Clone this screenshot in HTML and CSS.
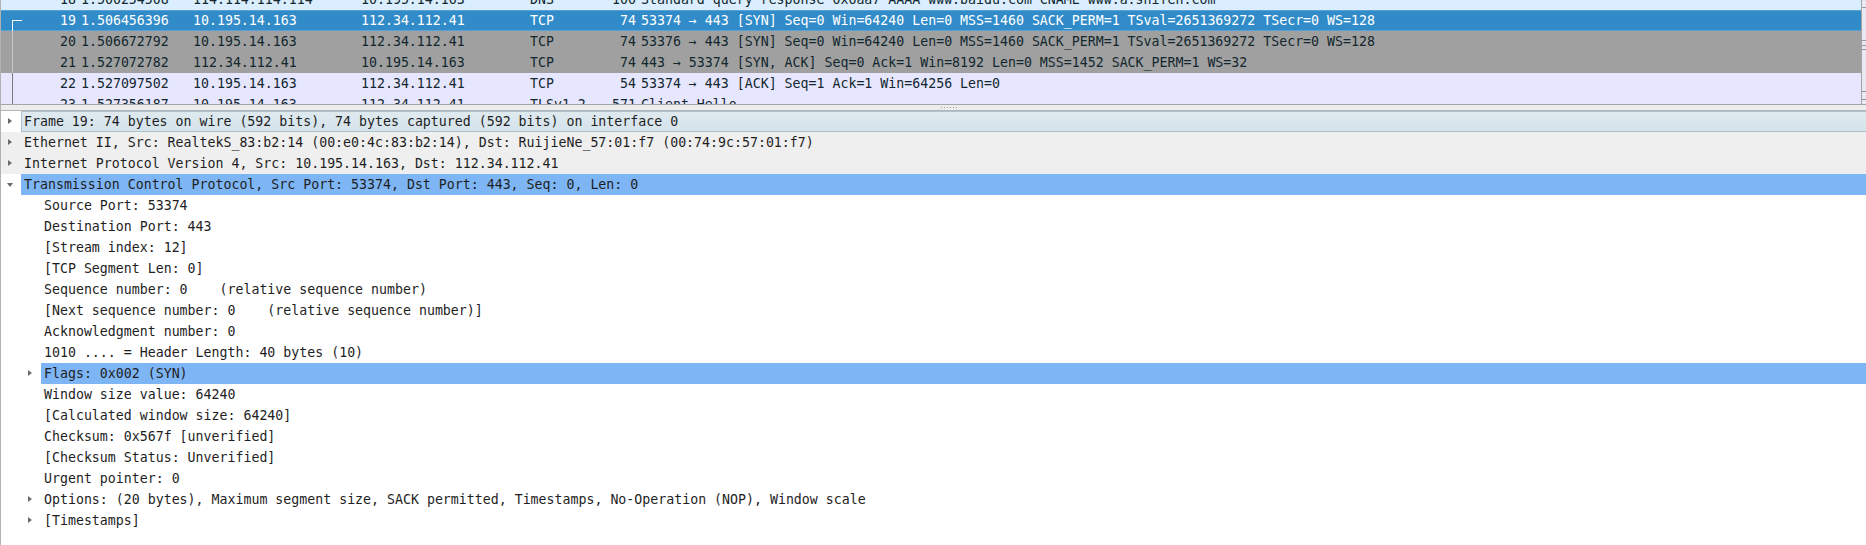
FILE: index.html
```html
<!DOCTYPE html>
<html>
<head>
<meta charset="utf-8">
<link rel="stylesheet" href="styles.css">
</head>
<body>
<div class="app">
  <div class="plist">
    <div class="plist-rows">
      <div class="plist-inner">
        <div class="prow dns"><span class="c no">18</span><span class="c tm">1.500254508</span><span class="c src">114.114.114.114</span><span class="c dst">10.195.14.163</span><span class="c pr">DNS</span><span class="c len">100</span><span class="c info">Standard query response 0x6aa7 AAAA www.baidu.com CNAME www.a.shifen.com</span></div>
        <div class="prow sel"><span class="c no"><i class="rel-start"></i>19</span><span class="c tm">1.506456396</span><span class="c src">10.195.14.163</span><span class="c dst">112.34.112.41</span><span class="c pr">TCP</span><span class="c len">74</span><span class="c info">53374 → 443 [SYN] Seq=0 Win=64240 Len=0 MSS=1460 SACK_PERM=1 TSval=2651369272 TSecr=0 WS=128</span></div>
        <div class="prow syn"><span class="c no"><i class="rel-line"></i>20</span><span class="c tm">1.506672792</span><span class="c src">10.195.14.163</span><span class="c dst">112.34.112.41</span><span class="c pr">TCP</span><span class="c len">74</span><span class="c info">53376 → 443 [SYN] Seq=0 Win=64240 Len=0 MSS=1460 SACK_PERM=1 TSval=2651369272 TSecr=0 WS=128</span></div>
        <div class="prow syn"><span class="c no"><i class="rel-line"></i>21</span><span class="c tm">1.527072782</span><span class="c src">112.34.112.41</span><span class="c dst">10.195.14.163</span><span class="c pr">TCP</span><span class="c len">74</span><span class="c info">443 → 53374 [SYN, ACK] Seq=0 Ack=1 Win=8192 Len=0 MSS=1452 SACK_PERM=1 WS=32</span></div>
        <div class="prow tcp"><span class="c no"><i class="rel-line"></i>22</span><span class="c tm">1.527097502</span><span class="c src">10.195.14.163</span><span class="c dst">112.34.112.41</span><span class="c pr">TCP</span><span class="c len">54</span><span class="c info">53374 → 443 [ACK] Seq=1 Ack=1 Win=64256 Len=0</span></div>
        <div class="prow tcp"><span class="c no"><i class="rel-line"></i>23</span><span class="c tm">1.527356187</span><span class="c src">10.195.14.163</span><span class="c dst">112.34.112.41</span><span class="c pr">TLSv1.2</span><span class="c len">571</span><span class="c info">Client Hello</span></div>
      </div>
    </div>
    <div class="minimap">
      <i class="mk m1"></i><i class="mk m2"></i><i class="mk m3"></i><i class="mk m4"></i><i class="mk m5"></i><i class="mk m6"></i>
    </div>
  </div>
  <div class="splitter"><span class="grip"><i></i><i></i><i></i><i></i><i></i><i></i></span></div>
  <div class="tree">
    <div class="node l0 hover"><span class="tw"><i class="ar-r"></i></span><span class="lbl">Frame 19: 74 bytes on wire (592 bits), 74 bytes captured (592 bits) on interface 0</span></div>
    <div class="node l0 grey"><span class="tw"><i class="ar-r"></i></span><span class="lbl">Ethernet II, Src: RealtekS_83:b2:14 (00:e0:4c:83:b2:14), Dst: RuijieNe_57:01:f7 (00:74:9c:57:01:f7)</span></div>
    <div class="node l0 grey"><span class="tw"><i class="ar-r"></i></span><span class="lbl">Internet Protocol Version 4, Src: 10.195.14.163, Dst: 112.34.112.41</span></div>
    <div class="node l0 hl"><span class="tw"><i class="ar-d"></i></span><span class="lbl">Transmission Control Protocol, Src Port: 53374, Dst Port: 443, Seq: 0, Len: 0</span></div>
    <div class="node l1"><span class="ind"></span><span class="tw"></span><span class="lbl">Source Port: 53374</span></div>
    <div class="node l1"><span class="ind"></span><span class="tw"></span><span class="lbl">Destination Port: 443</span></div>
    <div class="node l1"><span class="ind"></span><span class="tw"></span><span class="lbl">[Stream index: 12]</span></div>
    <div class="node l1"><span class="ind"></span><span class="tw"></span><span class="lbl">[TCP Segment Len: 0]</span></div>
    <div class="node l1"><span class="ind"></span><span class="tw"></span><span class="lbl">Sequence number: 0    (relative sequence number)</span></div>
    <div class="node l1"><span class="ind"></span><span class="tw"></span><span class="lbl">[Next sequence number: 0    (relative sequence number)]</span></div>
    <div class="node l1"><span class="ind"></span><span class="tw"></span><span class="lbl">Acknowledgment number: 0</span></div>
    <div class="node l1"><span class="ind"></span><span class="tw"></span><span class="lbl">1010 .... = Header Length: 40 bytes (10)</span></div>
    <div class="node l1 hl"><span class="ind"></span><span class="tw"><i class="ar-r"></i></span><span class="lbl">Flags: 0x002 (SYN)</span></div>
    <div class="node l1"><span class="ind"></span><span class="tw"></span><span class="lbl">Window size value: 64240</span></div>
    <div class="node l1"><span class="ind"></span><span class="tw"></span><span class="lbl">[Calculated window size: 64240]</span></div>
    <div class="node l1"><span class="ind"></span><span class="tw"></span><span class="lbl">Checksum: 0x567f [unverified]</span></div>
    <div class="node l1"><span class="ind"></span><span class="tw"></span><span class="lbl">[Checksum Status: Unverified]</span></div>
    <div class="node l1"><span class="ind"></span><span class="tw"></span><span class="lbl">Urgent pointer: 0</span></div>
    <div class="node l1"><span class="ind"></span><span class="tw"><i class="ar-r"></i></span><span class="lbl">Options: (20 bytes), Maximum segment size, SACK permitted, Timestamps, No-Operation (NOP), Window scale</span></div>
    <div class="node l1"><span class="ind"></span><span class="tw"><i class="ar-r"></i></span><span class="lbl">[Timestamps]</span></div>
  </div>
</div>
</body>
</html>
```

FILE: styles.css
```css
html, body {
  margin: 0;
  padding: 0;
  background: #ffffff;
}
body {
  font-family: "DejaVu Sans Mono", monospace;
  font-size: 13.25px;
  color: #1c1c1c;
}
.app {
  height: 545px;
  overflow: hidden;
  border-left: 1px solid #b2b2b2;
  display: flex;
  flex-direction: column;
}

/* packet list */
.plist {
  height: 104px;
  flex: none;
  display: flex;
  border-bottom: 1px solid #a6a6a6;
  overflow: hidden;
}
.plist-rows {
  flex: 1;
  overflow: hidden;
  border-right: 1px solid #a4a4a4;
}
.plist-inner {
  margin-top: -11px;
}
.prow {
  display: grid;
  grid-template-columns: 78px 111px 168px 169px 73px 39px 1fr;
  height: 21px;
  line-height: 21px;
  white-space: pre;
  color: #12272e;
}
.c { overflow: hidden; }
.no { text-align: right; padding-right: 3px; position: relative; }
.tm { padding-left: 2px; }
.src { padding-left: 3px; }
.dst { padding-left: 3px; }
.pr { padding-left: 3px; }
.len { text-align: right; padding-right: 3px; }
.info { padding-left: 2px; }

.dns { background: #daeeff; }
.sel {
  background: #308bc8;
  color: #ffffff;
  box-shadow: inset 0 1px 0 #56a2d6, inset 0 -1px 0 #56a2d6;
}
.syn { background: #a0a0a0; }
.tcp { background: #e7e6ff; }

.rel-start {
  position: absolute;
  left: 11px;
  top: 10px;
  width: 10px;
  height: 11px;
  border-left: 1px solid #ffffff;
  border-top: 1px solid #ffffff;
  box-sizing: border-box;
}
.rel-line {
  position: absolute;
  left: 11px;
  top: 0;
  width: 1px;
  height: 21px;
  background: #7c7c7c;
}
.syn .rel-line { background: #c4c4c4; }

.minimap {
  width: 4px;
  flex: none;
  background: #e8e8f4;
  position: relative;
}
.mk {
  position: absolute;
  left: 0;
  width: 4px;
  height: 1px;
  background: #9a9a9a;
}
.m1 { top: 7px; }
.m2 { top: 40px; }
.m3 { top: 45px; }
.m4 { top: 49px; }
.m5 { top: 91px; }
.m6 { top: 99px; }

/* splitter */
.splitter {
  height: 5px;
  flex: none;
  background: #ededed;
  border-bottom: 1px solid #b4b4b4;
  display: flex;
  justify-content: center;
  align-items: center;
}
.grip {
  display: flex;
  gap: 2px;
  margin-left: 30px;
}
.grip i {
  width: 1px;
  height: 1px;
  background: #9c9c9c;
}

/* details tree */
.tree {
  flex: 1;
}
.node {
  display: flex;
  height: 21px;
  line-height: 21px;
  white-space: pre;
  color: #1e1e1e;
}
.ind { width: 20px; flex: none; }
.tw {
  width: 20px;
  flex: none;
  position: relative;
}
.lbl {
  flex: 1;
  padding-left: 3px;
  overflow: hidden;
}
.grey { background: #efefef; }
.hover .lbl {
  background: linear-gradient(#dfeaf0, #d5e2ea);
  box-shadow: inset 1px 0 0 #aec3d0, inset 0 1px 0 #aec3d0, inset 0 -1px 0 #aec3d0;
}
.hl .lbl { background: #7eb5f4; }
.ar-r {
  position: absolute;
  left: 7px;
  top: 7px;
  width: 0;
  height: 0;
  border-top: 3.5px solid transparent;
  border-bottom: 3.5px solid transparent;
  border-left: 4px solid #6a6a6a;
}
.ar-d {
  position: absolute;
  left: 6px;
  top: 9px;
  width: 0;
  height: 0;
  border-left: 3.5px solid transparent;
  border-right: 3.5px solid transparent;
  border-top: 4px solid #6a6a6a;
}
```
